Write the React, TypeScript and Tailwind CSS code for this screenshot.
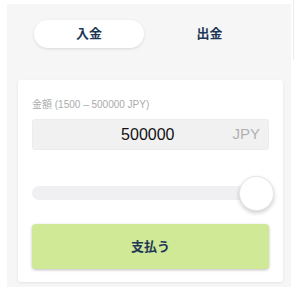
export default function App() {
  const font = { fontFamily: '"Liberation Sans", "Noto Sans CJK JP", sans-serif' };
  return (
    <div className="flex h-[289px] w-[300px] bg-white" style={font}>
      <div className="ml-[7px] mt-[4px] h-[283px] w-[284px] bg-[#f6f6f6]">
        {/* tabs */}
        <div className="mx-auto mt-4 flex w-[240px]">
          <button className="ml-[5px] mr-[6px] flex h-[28px] w-[110px] items-center justify-center rounded-full bg-white text-[13px] font-bold text-[#1d3856] shadow-[0_1px_3px_rgba(0,0,0,0.12)]">
            入金
          </button>
          <button className="flex h-[28px] w-[119px] items-center justify-center text-[13px] font-bold text-[#1d3856]">
            出金
          </button>
        </div>

        {/* card */}
        <div className="ml-[11px] mt-[32px] w-[265px] rounded-[3px] bg-white px-[14px] pb-[13px] pt-[17px] shadow-[0_1px_3px_rgba(0,0,0,0.08)]">
          <div className="text-[10px] leading-[16px] text-[#ababab]">
            金額 (1500 – 500000 JPY)
          </div>
          <div className="mt-[6px] flex h-[31px] items-center rounded-[3px] border border-[#ececec] bg-[#f1f1f1] pr-[8px]">
            <span className="flex-1 text-right text-[16px] text-[#111]">500000</span>
            <span className="ml-[58px] text-[15px] text-[#b0b0b0]">JPY</span>
          </div>

          {/* slider */}
          <div className="relative mt-[26px] h-[35px]">
            <div className="absolute left-0 right-[22px] top-[10px] h-[14px] rounded-full bg-[#f0f0f2]" />
            <div className="absolute right-[-5px] top-0 h-[35px] w-[35px] rounded-full border border-[#e6e6e6] bg-white shadow-[0_2px_4px_rgba(0,0,0,0.2)]" />
          </div>

          <button className="mt-[13px] flex h-[45px] w-full items-center justify-center rounded-[4px] bg-[#cfe997] text-[13px] font-bold text-[#1d3856] shadow-[0_1px_3px_rgba(0,0,0,0.25)]">
            支払う
          </button>
        </div>
      </div>
      <div className="ml-[2px] mt-0 h-[60px] w-px bg-[#ececec]" />
    </div>
  );
}
